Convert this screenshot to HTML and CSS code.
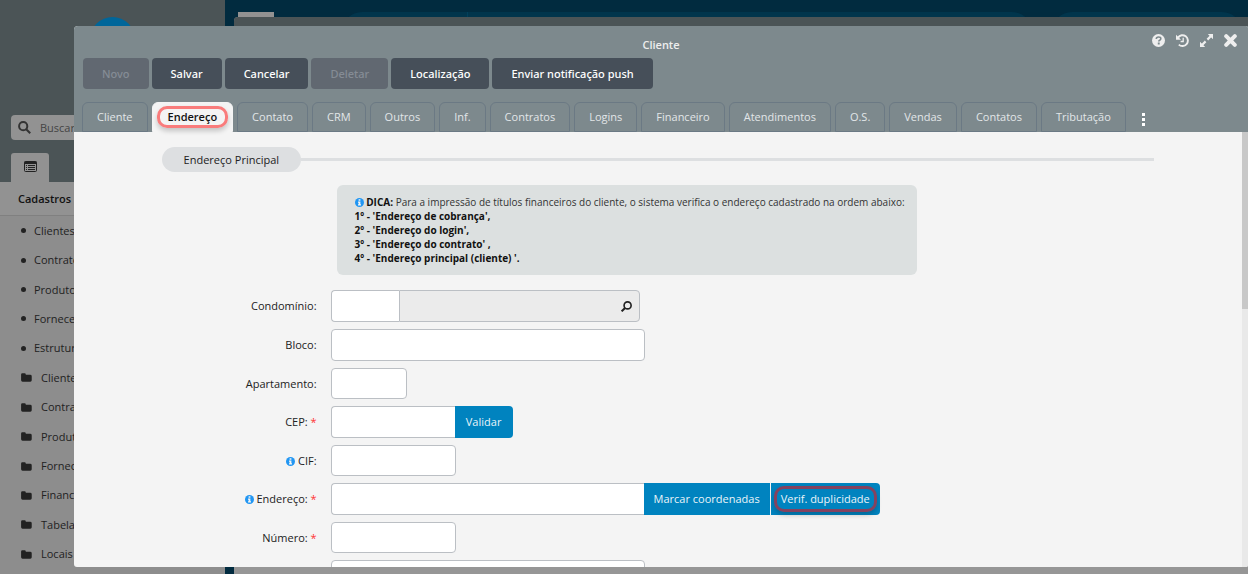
FILE: index.html
```html
<!DOCTYPE html>
<html lang="pt-BR">
<head>
<meta charset="utf-8">
<meta name="viewport" content="width=device-width, initial-scale=1">
<title>Cliente</title>
<link rel="stylesheet" href="styles.css">
</head>
<body>
<svg class="symbols" aria-hidden="true">
  <symbol id="folder" viewBox="0 0 12 10"><path d="M0 1.600Q0 .3 1.300.3h2.600q1.300 0 1.300 1.300v.3h4.900q1.700 0 1.700 1.600v4.600q0 1.600-1.600 1.600H1.600Q0 9.700 0 8.100z" fill="currentColor"/></symbol>
  <symbol id="info" viewBox="0 0 12 12"><circle cx="6" cy="6" r="6" fill="#2196f3"/><path d="M4.800 1.800h2.400v2H4.800zM4 4.700h3.200v3.700H8v1.600H4V8.400h.8V6.200H4z" fill="#f4f4f4"/></symbol>
</svg>

<div class="app">
  <aside class="sidebar">
    <div class="sidebar-head">
      <div class="avatar"></div>
      <label class="search">
        <svg width="13" height="13" viewBox="0 0 13 13" fill="none" stroke="currentColor" stroke-width="2"><circle cx="5.200" cy="5.200" r="4.100"/><path d="M8.200 8.200l4 4"/></svg>
        <input type="text" placeholder="Buscar" aria-label="Buscar">
      </label>
      <button class="side-tab" type="button" aria-label="Cadastros">
        <svg width="13" height="11" viewBox="0 0 13 11"><rect x=".5" y=".5" width="12" height="10" rx="1" fill="none" stroke="currentColor"/><path d="M.5.500h12v2.500H.5zM2 4h1v1H2zm2 0h7v1H4zM2 6h1v1H2zm2 0h7v1H4zM2 8h1v1H2zm2 0h7v1H4z" fill="currentColor"/></svg>
      </button>
    </div>
    <h2 class="side-title">Cadastros</h2>
    <ul class="menu">
      <li><i class="dot"></i>Clientes</li>
      <li><i class="dot"></i>Contratos</li>
      <li><i class="dot"></i>Produtos</li>
      <li><i class="dot"></i>Fornecedores</li>
      <li><i class="dot"></i>Estrutura</li>
      <li><svg class="folder"><use href="#folder"/></svg>Clientes</li>
      <li><svg class="folder"><use href="#folder"/></svg>Contratos</li>
      <li><svg class="folder"><use href="#folder"/></svg>Produtos</li>
      <li><svg class="folder"><use href="#folder"/></svg>Fornecedores</li>
      <li><svg class="folder"><use href="#folder"/></svg>Financeiro</li>
      <li><svg class="folder"><use href="#folder"/></svg>Tabelas</li>
      <li><svg class="folder"><use href="#folder"/></svg>Locais</li>
    </ul>
  </aside>
  <div class="workspace">
    <div class="cards">
      <div class="logo"></div>
      <div class="card card-wide"><div class="card-split"></div></div>
      <div class="card card-small"></div>
    </div>
    <div class="panel"><div class="panel-head"></div></div>
  </div>
</div>

<section class="modal" role="dialog" aria-labelledby="title">
  <header class="modal-head">
    <div class="titlebar">
      <h1 class="title" id="title">Cliente</h1>
      <div class="tools">
        <button class="tool" type="button" aria-label="Ajuda"><svg viewBox="0 0 13 13"><circle cx="6.500" cy="6.500" r="6.500" fill="#eee"/><path d="M4.300 5q0-2 2.300-2t2.200 1.800q0 1-1.100 1.500-.9.400-.9 1.300" fill="none" stroke="#7d898d" stroke-width="1.600"/><path d="M5.800 8.600h1.900v1.800H5.800z" fill="#7d898d"/></svg></button>
        <button class="tool" type="button" aria-label="Histórico"><svg viewBox="0 0 13 13" fill="none" stroke="#eee" stroke-width="1.900"><path d="M2 3.600A5.400 5.400 0 1 1 2.800 10.600"/><path d="M0 .8v5h5z" fill="#eee" stroke="none"/><path d="M7.200 3.800v3.700H4.600" stroke-width="1.300"/></svg></button>
        <button class="tool" type="button" aria-label="Expandir"><svg viewBox="0 0 13 13" fill="#eee"><path d="M13 0v5.200L7.800 0zM0 13V7.800L5.200 13z"/><path d="M11.200 1.800L7.400 5.600M5.600 7.400L1.800 11.200" stroke="#eee" stroke-width="2.200"/></svg></button>
        <button class="tool" type="button" aria-label="Fechar"><svg viewBox="0 0 13 13"><path d="M2.200 2.200l8.600 8.600M10.800 2.200l-8.600 8.600" stroke="#eee" stroke-width="4" stroke-linecap="round"/></svg></button>
      </div>
    </div>
    <div class="actions">
      <button class="action" type="button" disabled>Novo</button>
      <button class="action" type="button">Salvar</button>
      <button class="action" type="button">Cancelar</button>
      <button class="action" type="button" disabled>Deletar</button>
      <button class="action" type="button">Localização</button>
      <button class="action" type="button">Enviar notificação push</button>
    </div>
    <nav class="tabs">
      <button class="tab" type="button">Cliente</button>
      <button class="tab active" type="button"><span class="mark">Endereço</span></button>
      <button class="tab" type="button">Contato</button>
      <button class="tab" type="button">CRM</button>
      <button class="tab" type="button">Outros</button>
      <button class="tab" type="button">Inf.</button>
      <button class="tab" type="button">Contratos</button>
      <button class="tab" type="button">Logins</button>
      <button class="tab" type="button">Financeiro</button>
      <button class="tab" type="button">Atendimentos</button>
      <button class="tab" type="button">O.S.</button>
      <button class="tab" type="button">Vendas</button>
      <button class="tab" type="button">Contatos</button>
      <button class="tab" type="button">Tributação</button>
      <button class="more" type="button" aria-label="Mais"><svg width="3" height="13" viewBox="0 0 3 13" fill="#fff"><path d="M0 0h3v3H0zM0 5h3v3H0zM0 10h3v3H0z"/></svg></button>
    </nav>
  </header>
  <div class="modal-body">
    <form class="form">
      <div class="legend"><span class="pill">Endereço Principal</span></div>
      <div class="tip">
        <svg class="info"><use href="#info"/></svg> <b>DICA:</b> Para a impressão de títulos financeiros do cliente, o sistema verifica o endereço cadastrado na ordem abaixo:<br>
        <b>1º - 'Endereço de cobrança',<br>2º - 'Endereço do login',<br>3º - 'Endereço do contrato' ,<br>4º - 'Endereço principal (cliente) '.</b>
      </div>
      <div class="rows">
        <div class="row"><label for="cond">Condomínio:</label>
          <div class="group"><input class="field code" id="cond" type="text"><div class="lookup"><button type="button" class="lens" aria-label="Pesquisar"><svg width="11" height="11" viewBox="0 0 10 10" fill="none" stroke="#222"><circle cx="6" cy="4" r="3.200" stroke-width="1.500"/><path d="M3.700 6.300L.6 9.400" stroke-width="1.800"/></svg></button></div></div></div>
        <div class="row"><label for="bloco">Bloco:</label><input class="field wide" id="bloco" type="text"></div>
        <div class="row"><label for="apto">Apartamento:</label><input class="field tiny" id="apto" type="text"></div>
        <div class="row"><label for="cep">CEP: <em>*</em></label>
          <div class="group"><input class="field medium" id="cep" type="text"><button class="btn" type="button">Validar</button></div></div>
        <div class="row"><label for="cif"><svg class="info"><use href="#info"/></svg> CIF:</label><input class="field short" id="cif" type="text"></div>
        <div class="row"><label for="end"><svg class="info"><use href="#info"/></svg> Endereço: <em>*</em></label>
          <div class="group"><input class="field wide" id="end" type="text"><button class="btn" type="button">Marcar coordenadas</button><button class="btn btn-marked" type="button"><span class="mark mark-dark">Verif. duplicidade</span></button></div></div>
        <div class="row"><label for="num">Número: <em>*</em></label><input class="field short" id="num" type="text"></div>
        <div class="row"><label></label><input class="field wide" type="text" aria-label="Complemento"></div>
      </div>
    </form>
    <div class="scrollbar"><div class="thumb"></div></div>
  </div>
</section>
</body>
</html>
```
FILE: styles.css
```css
* { box-sizing: border-box; }
html, body { height: 100%; }
body {
  margin: 0;
  overflow: hidden;
  position: relative;
  font: 11px/14px "Open Sans", "Noto Sans", sans-serif;
  color: #222;
}
button, input { font: inherit; margin: 0; }
button { border: 0; padding: 0; }
svg { display: block; }
.symbols { position: absolute; width: 0; height: 0; }

/* Page behind the dialog */
.app { display: flex; height: 100%; background: #012b3f; }
.sidebar { width: 225px; flex: none; display: flex; flex-direction: column; background: #8d8d8d; }
.sidebar-head { background: #4b5456; padding: 17px 0 0 11px; }
.avatar { width: 45px; height: 45px; border-radius: 50%; background: #00669a; margin: 0 auto 53px 79px; }
.search { display: flex; align-items: center; gap: 9px; height: 25px; margin-right: 11px; padding-left: 7px; border-radius: 4px; background: #929292; color: #333; }
.search svg { flex: none; }
.search input { border: 0; background: none; padding: 0; width: 100%; }
.search input::placeholder { color: #444; opacity: 1; }
.side-tab { display: flex; align-items: center; justify-content: center; width: 38px; height: 29px; margin-top: 13px; padding-bottom: 2px; border-radius: 3px 3px 0 0; background: #929292; color: #222; }
.side-title { margin: 0; padding: 10px 18px 9px; font-size: 11px; line-height: 14px; font-weight: 600; background: #929292; border-bottom: 1px solid #808080; color: #111; }
.menu { flex: 1; display: grid; grid-auto-rows: 1fr; list-style: none; margin: 0; padding: 0 0 5px 21px; }
.menu li { display: flex; align-items: center; }
.dot { width: 5px; height: 5px; border-radius: 50%; background: #222; margin-right: 8px; }
.folder { width: 11px; height: 9px; margin-right: 9px; }
.workspace { flex: 1; display: flex; flex-direction: column; padding: 12px 0 0 9px; }
.cards { display: flex; height: 5px; overflow: hidden; }
.logo { width: 36px; margin: 0 68px 0 4px; background: #929292; }
.card { height: 40px; border-radius: 20px; background: #01354c; }
.card-wide { flex: 1; display: flex; }
.card-split { width: 126px; border-right: 1px solid #01405b; }
.card-small { width: 190px; margin: 0 6px 0 20px; }
.panel { flex: 1; background: #969696; border-radius: 4px 0 0 0; overflow: hidden; }
.panel-head { height: 40px; background: #4b5456; }

/* Dialog */
.modal {
  position: absolute;
  top: 26px; right: 0; bottom: 7px; left: 74px;
  display: flex;
  flex-direction: column;
  border-radius: 4px 2px 2px 3px;
  overflow: hidden;
  background: #f4f4f4;
}
.modal-head { background: #7d898d; }
.titlebar { display: grid; grid-template-columns: 1fr auto 1fr; height: 32px; }
.title { grid-column: 2; margin: 12px 0 0; font-size: 11px; line-height: 14px; font-weight: 600; color: #eee; }
.tools { display: flex; justify-content: flex-end; gap: 11px; padding: 8px 11px 0 0; }
.tool { width: 13px; height: 13px; background: none; }
.tool svg { width: 13px; height: 13px; }
.actions { display: flex; gap: 3px; padding: 0 9px; }
.action { height: 31px; padding: 0 19px; border-radius: 4px; background: #464f59; color: #fff; font-family: "Noto Sans", "Open Sans", sans-serif; font-weight: 500; }
.action:disabled { background: #616871; color: #858c95; }
.tabs { display: flex; gap: 4px; height: 43px; padding: 13px 8px 0; }
.tab { padding: 0 14px; border: 1px solid #6b7984; border-radius: 6px 6px 0 0; background: none; color: #e2e6e8; white-space: nowrap; }
.tab.active { padding: 0 4px; background: #f4f4f4; border-color: #f4f4f4; color: #111; font-weight: 600; }
.mark { display: block; padding: 1px 8px; border: 3px solid #f97c7c; border-radius: 10px; box-shadow: 0 3px 5px rgba(0, 0, 0, .2); }
.more { width: 27px; display: flex; align-items: center; justify-content: center; background: none; padding-top: 5px; }

.modal-body { flex: 1; min-height: 0; display: flex; }
.form { flex: 1; overflow: hidden; padding: 15px 0 0; }
.legend, .tip, .rows { width: 85%; margin: 0 auto; }
.legend { display: flex; align-items: center; }
.legend::after { content: ""; flex: 1; height: 3px; background: #dddfe1; }
.pill { padding: 6px 22px 5px; border-radius: 13px; background: #dddfe1; }
.tip { width: fit-content; margin: 13px 0 15px calc(7.5% + 175px); padding: 10px 12px 10px 18px; border-radius: 6px; background: #dce0e0; color: #333; font-size: 10px; }
.tip b { color: #111; }
.info { display: inline-block; width: 9px; height: 9px; vertical-align: -1px; }
.rows { display: grid; gap: 7px; }
.row { display: flex; align-items: center; }
.row label { width: 155px; margin-right: 14px; text-align: right; }
.row em { color: #f33; font-style: normal; }
.field { height: 32px; padding: 0 8px; border: 1px solid #bbbfc4; border-radius: 4px; background: #fff; }
.tiny, .short { height: 31px; }
.tiny { width: 76px; }
.short { width: 125px; }
.medium { width: 124px; }
.wide { width: 314px; }
.code { width: 68px; }
.group { display: flex; }
.group .field { border-right: 0; border-radius: 4px 0 0 4px; }
.group .wide { width: 313px; }
.lookup { display: flex; justify-content: flex-end; width: 241px; padding-right: 7px; border: 1px solid #bbbfc4; border-radius: 0 4px 4px 0; background: #ebebeb; }
.lens { display: flex; align-items: center; background: none; }
.btn { min-width: 58px; padding: 0 10px; background: #0083bf; color: #eaf4f9; white-space: nowrap; }
.btn:last-child { border-radius: 0 4px 4px 0; }
.btn-marked { margin-left: 1px; padding: 0 3px; }
.mark-dark { padding: 3px 4px; border-color: #84425f; }
.scrollbar { width: 6px; background: #e9e9e9; }
.thumb { height: 177px; background: #c8c8c8; }
```
